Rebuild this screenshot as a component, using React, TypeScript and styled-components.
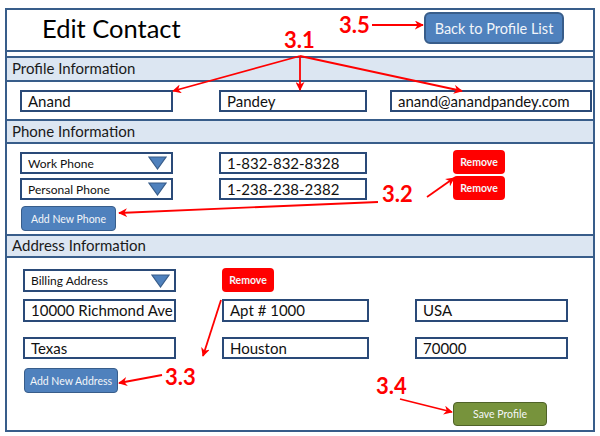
import React from "react";
import styled, { createGlobalStyle } from "styled-components";

const Global = createGlobalStyle`
  html, body { margin: 0; padding: 0; background: #ffffff; }
  body { font-family: Lato, "Open Sans", sans-serif; color: #111; }
`;

const BLUE = "#385d8a";

const Page = styled.div`
  position: relative;
  width: 600px;
  height: 436px;
  overflow: hidden;
  padding: 8px 0 0 5px;
  box-sizing: border-box;
`;

const Frame = styled.div`
  width: 590px;
  height: 424px;
  box-sizing: border-box;
  border: 2px solid ${BLUE};
  display: flex;
  flex-direction: column;
`;

const Header = styled.header`
  height: 42px;
  flex: none;
  box-sizing: border-box;
  border-bottom: 2px solid ${BLUE};
  display: flex;
  justify-content: space-between;
  align-items: flex-start;
  padding: 2px 29px 0 35px;
`;

const Title = styled.h1`
  margin: 1px 0 0;
  font-size: 25.5px;
  line-height: 30px;
  font-weight: 400;
  color: #000;
`;

const BackButton = styled.button`
  width: 140px;
  height: 32px;
  box-sizing: border-box;
  border: 2px solid ${BLUE};
  border-radius: 6px;
  background: #4f81bd;
  color: #f2f5fa;
  font-family: Lato, sans-serif;
  font-size: 14.5px;
  padding: 0;
`;

const Band = styled.div<{ $h: number; $gap?: number }>`
  flex: none;
  height: ${(p) => p.$h}px;
  margin-top: ${(p) => p.$gap ?? 0}px;
  box-sizing: border-box;
  border-top: 2px solid ${BLUE};
  border-bottom: 2px solid ${BLUE};
  background: #dce6f2;
  display: flex;
  align-items: center;
  padding: 0 0 2px 5px;
  font-size: 15px;
  color: #1a1a1a;
`;

const Section = styled.section<{ $h?: number; $pt: number; $pl: number }>`
  ${(p) => (p.$h ? `height: ${p.$h}px; flex: none;` : "flex: 1;")}
  box-sizing: border-box;
  padding: ${(p) => p.$pt}px 0 0 ${(p) => p.$pl}px;
  display: flex;
  flex-direction: column;
`;

/* $cols holds the field tracks and the gap tracks in between: fields sit on odd tracks */
const Row = styled.div<{ $cols: string; $mt?: number; $h: number }>`
  display: grid;
  grid-template-columns: ${(p) => p.$cols};
  height: ${(p) => p.$h}px;
  margin-top: ${(p) => p.$mt ?? 0}px;
  align-items: end;
  & > :nth-child(1) { grid-column: 1; }
  & > :nth-child(2) { grid-column: 3; }
  & > :nth-child(3) { grid-column: 5; }
`;

const Field = styled.div<{ $h?: number }>`
  height: ${(p) => p.$h ?? 22}px;
  box-sizing: border-box;
  border: 2px solid #2a4a78;
  background: #fff;
  display: flex;
  align-items: center;
  padding: 0 0 1px 6px;
  font-size: 15px;
  color: #111;
  white-space: nowrap;
  overflow: hidden;
`;

const SelectBox = styled(Field)`
  justify-content: space-between;
  font-size: 12px;
  padding: 0 4px 0 6px;
`;

const Arrow = styled.svg`
  width: 19px;
  height: 14px;
  flex: none;
`;

const ActionButton = styled.button<{ $w: number; $h: number; $bg: string; $border: string; $bold?: boolean; $mt?: number; $ml?: number }>`
  width: ${(p) => p.$w}px;
  height: ${(p) => p.$h}px;
  margin: ${(p) => p.$mt ?? 0}px 0 0 ${(p) => p.$ml ?? 0}px;
  box-sizing: border-box;
  border: ${(p) => (p.$border === "none" ? "none" : `1.5px solid ${p.$border}`)};
  border-radius: 4px;
  background: ${(p) => p.$bg};
  color: #f4f6f9;
  font-family: Lato, sans-serif;
  font-size: 10.5px;
  font-weight: ${(p) => (p.$bold ? 700 : 400)};
  padding: 0;
  flex: none;
`;

const Footer = styled.div`
  display: flex;
  justify-content: flex-end;
  padding-right: 46px;
  margin-top: 9px;
`;

const Overlay = styled.svg`
  position: absolute;
  left: 0;
  top: 0;
  width: 600px;
  height: 436px;
  pointer-events: none;
  overflow: visible;
`;

const Label = styled.text`
  font-family: Lato, "Liberation Sans", sans-serif;
  font-weight: 700;
  font-size: 22px;
  fill: #ff0000;
`;

function Select({ label, h }: { label: string; h?: number }) {
  return (
    <SelectBox $h={h}>
      <span>{label}</span>
      <Arrow viewBox="0 0 19 14">
        <polygon points="1,1 18,1 9.5,13" fill="#4f81bd" stroke="#385d8a" strokeWidth="1.2" />
      </Arrow>
    </SelectBox>
  );
}

const arrows: [number, number, number, number][] = [
  [300, 56, 173, 91],
  [300, 56, 300, 90],
  [300, 56, 462, 91],
  [372, 25, 423, 25],
  [427, 197, 454, 178],
  [378, 202, 119, 213],
  [162, 375, 119, 383],
  [221, 300, 203, 356],
  [400, 399, 452, 412],
];

const PROFILE_COLS = "153px 46px 148px 23px 202px";
const PHONE_COLS = "153px 46px 148px 86px 52px";
const ADDR_COLS = "153px 46px 147px 46px 153px";

export default function App() {
  return (
    <>
      <Global />
      <Page>
        <Frame>
          <Header>
            <Title>Edit Contact</Title>
            <BackButton>Back to Profile List</BackButton>
          </Header>

          <Band $h={26} $gap={4}>Profile Information</Band>
          <Section $h={37} $pt={8} $pl={13}>
            <Row $cols={PROFILE_COLS} $h={22}>
              <Field>Anand</Field>
              <Field>Pandey</Field>
              <Field>anand@anandpandey.com</Field>
            </Row>
          </Section>

          <Band $h={25}>Phone Information</Band>
          <Section $h={90} $pt={6} $pl={13}>
            <Row $cols={PHONE_COLS} $h={24}>
              <Select label="Work Phone" />
              <Field>1-832-832-8328</Field>
              <ActionButton $w={52} $h={24} $bg="#ff0000" $border="none" $bold>Remove</ActionButton>
            </Row>
            <Row $cols={PHONE_COLS} $h={24} $mt={2}>
              <Select label="Personal Phone" />
              <Field>1-238-238-2382</Field>
              <ActionButton $w={52} $h={24} $bg="#ff0000" $border="none" $bold>Remove</ActionButton>
            </Row>
            <ActionButton $w={95} $h={25} $bg="#4f81bd" $border={BLUE} $mt={6} $ml={1}>Add New Phone</ActionButton>
          </Section>

          <Band $h={24}>Address Information</Band>
          <Section $pt={9} $pl={16}>
            <Row $cols={ADDR_COLS} $h={25}>
              <Select label="Billing Address" h={23} />
              <ActionButton $w={52} $h={24} $bg="#ff0000" $border="none" $bold>Remove</ActionButton>
            </Row>
            <Row $cols={ADDR_COLS} $h={23} $mt={7}>
              <Field $h={23}>10000 Richmond Ave</Field>
              <Field $h={23}>Apt # 1000</Field>
              <Field $h={23}>USA</Field>
            </Row>
            <Row $cols={ADDR_COLS} $h={22} $mt={15}>
              <Field>Texas</Field>
              <Field>Houston</Field>
              <Field>70000</Field>
            </Row>
            <ActionButton $w={94} $h={25} $bg="#4f81bd" $border={BLUE} $mt={9} $ml={1}>Add New Address</ActionButton>
            <Footer>
              <ActionButton $w={94} $h={24} $bg="#77933c" $border="#4f6228">Save Profile</ActionButton>
            </Footer>
          </Section>
        </Frame>

        <Overlay viewBox="0 0 600 436">
          <defs>
            <marker id="ah" viewBox="0 0 10 10" refX="9" refY="5" markerWidth="5" markerHeight="5" orient="auto-start-reverse" markerUnits="strokeWidth">
              <path d="M0,0 L10,5 L0,10 L3,5 z" fill="#ff0000" />
            </marker>
          </defs>
          {arrows.map(([x1, y1, x2, y2], i) => (
            <line key={i} x1={x1} y1={y1} x2={x2} y2={y2} stroke="#ff0000" strokeWidth="1.8" markerEnd="url(#ah)" />
          ))}
          <Label x="284" y="48">3.1</Label>
          <Label x="339" y="33">3.5</Label>
          <Label x="382" y="202">3.2</Label>
          <Label x="165" y="385">3.3</Label>
          <Label x="376" y="394">3.4</Label>
        </Overlay>
      </Page>
    </>
  );
}
